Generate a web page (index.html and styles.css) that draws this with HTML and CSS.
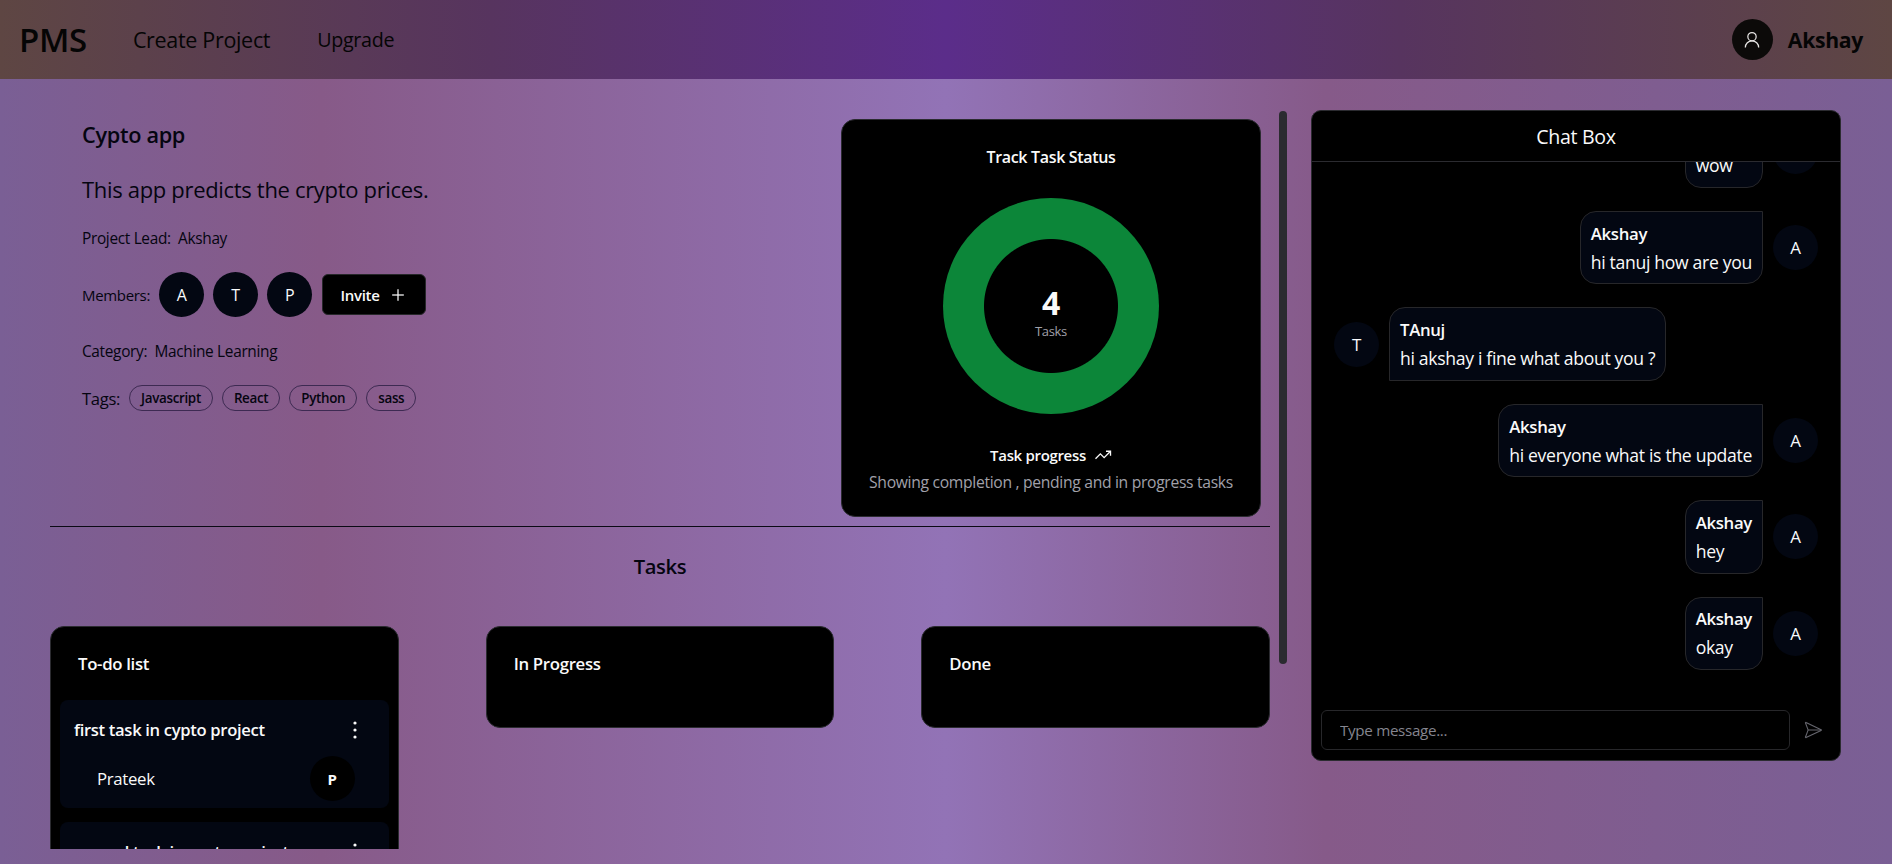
FILE: index.html
```html
<!DOCTYPE html>
<html lang="en">
<head>
  <meta charset="UTF-8">
  <title>PMS</title>
  <link rel="stylesheet" href="styles.css">
</head>
<body>
  <header class="navbar">
    <div class="nav-left">
      <span class="logo">PMS</span>
      <a class="nav-create">Create Project</a>
      <a class="nav-upgrade">Upgrade</a>
    </div>
    <div class="nav-right">
      <span class="user-icon">
        <svg width="20" height="20" viewBox="0 0 24 24" fill="none" stroke="currentColor" stroke-width="1.5"><circle cx="12" cy="8" r="5"/><path d="M20 21a8 8 0 0 0-16 0"/></svg>
      </span>
      <span class="user-name">Akshay</span>
    </div>
  </header>

  <main class="page">
    <section class="details">
      <div class="top">
        <div class="info">
          <h2 class="project-name">Cypto app</h2>
          <p class="project-desc">This app predicts the crypto prices.</p>
          <p class="meta lead">Project Lead:&nbsp; Akshay</p>
          <div class="meta members">
            <span>Members:</span>
            <span class="avatar">A</span>
            <span class="avatar">T</span>
            <span class="avatar">P</span>
            <button class="invite">Invite
              <svg width="20" height="20" viewBox="0 0 24 24" fill="none" stroke="currentColor" stroke-width="1.5"><path d="M5 12h14"/><path d="M12 5v14"/></svg>
            </button>
          </div>
          <p class="meta category">Category:&nbsp; Machine Learning</p>
          <div class="tags">
            <span class="tags-label">Tags:</span>
            <span class="tag">Javascript</span>
            <span class="tag">React</span>
            <span class="tag">Python</span>
            <span class="tag">sass</span>
          </div>
        </div>

        <div class="status-card">
          <h3 class="status-title">Track Task Status</h3>
          <div class="donut">
            <strong class="donut-count">4</strong>
            <span class="donut-label">Tasks</span>
          </div>
          <div class="progress-title">Task progress
            <svg width="18" height="18" viewBox="0 0 24 24" fill="none" stroke="currentColor" stroke-width="1.8"><path d="M22 7 13.5 15.5l-5-5L2 17"/><path d="M16 7h6v6"/></svg>
          </div>
          <p class="progress-text">Showing completion , pending and in progress tasks</p>
        </div>
      </div>

      <hr class="divider">
      <h2 class="tasks-heading">Tasks</h2>

      <div class="board">
        <div class="column">
          <h4 class="column-title">To-do list</h4>
          <div class="task">
            <div class="task-head">
              <span class="task-name">first task in cypto project</span>
              <svg class="dots" width="24" height="24" viewBox="0 0 24 24" fill="currentColor"><circle cx="12" cy="5" r="1.6"/><circle cx="12" cy="12" r="1.6"/><circle cx="12" cy="19" r="1.6"/></svg>
            </div>
            <div class="task-foot">
              <span class="assignee">Prateek</span>
              <span class="avatar avatar-dark">P</span>
            </div>
          </div>
          <div class="task">
            <div class="task-head">
              <span class="task-name">second task in cypto project</span>
              <svg class="dots" width="24" height="24" viewBox="0 0 24 24" fill="currentColor"><circle cx="12" cy="5" r="1.6"/><circle cx="12" cy="12" r="1.6"/><circle cx="12" cy="19" r="1.6"/></svg>
            </div>
            <div class="task-foot">
              <span class="assignee">Tanuj</span>
              <span class="avatar avatar-dark">T</span>
            </div>
          </div>
        </div>
        <div class="column column-empty">
          <h4 class="column-title">In Progress</h4>
        </div>
        <div class="column column-empty">
          <h4 class="column-title">Done</h4>
        </div>
      </div>
    </section>

    <div class="scroll-thumb"></div>

    <aside class="chat">
      <div class="chat-title">Chat Box</div>
      <div class="chat-messages">
        <div class="msg msg-me">
          <div class="bubble"><b>Akshay</b><span>wow</span></div>
          <span class="avatar avatar-chat">A</span>
        </div>
        <div class="msg msg-me">
          <div class="bubble"><b>Akshay</b><span>hi tanuj how are you</span></div>
          <span class="avatar avatar-chat">A</span>
        </div>
        <div class="msg">
          <span class="avatar avatar-chat">T</span>
          <div class="bubble"><b>TAnuj</b><span>hi akshay i fine what about you ?</span></div>
        </div>
        <div class="msg msg-me">
          <div class="bubble"><b>Akshay</b><span>hi everyone what is the update</span></div>
          <span class="avatar avatar-chat">A</span>
        </div>
        <div class="msg msg-me">
          <div class="bubble"><b>Akshay</b><span>hey</span></div>
          <span class="avatar avatar-chat">A</span>
        </div>
        <div class="msg msg-me">
          <div class="bubble"><b>Akshay</b><span>okay</span></div>
          <span class="avatar avatar-chat">A</span>
        </div>
      </div>
      <div class="chat-input">
        <input type="text" placeholder="Type message...">
        <svg class="send" width="20" height="20" viewBox="0 0 24 24" fill="none" stroke="currentColor" stroke-width="1.3"><path d="M3.7 3a.5.5 0 0 0-.7.7l2.9 7.6a2 2 0 0 1 0 1.4L3 20.3a.5.5 0 0 0 .7.7l18-8.5a.5.5 0 0 0 0-.9z"/><path d="M6 12h16"/></svg>
      </div>
    </aside>
  </main>
</body>
</html>
```

FILE: styles.css
```css
* {
  box-sizing: border-box;
}

body {
  margin: 0;
  height: 864px;
  overflow: hidden;
  font-family: "Open Sans", "Noto Sans", sans-serif;
  letter-spacing: -0.02em;
  color: #050510;
  background: linear-gradient(90deg, #7a5f95 0%, #875a88 17%, #9273b6 50%, #865a89 70%, #7a5f95 100%);
}

h2, h3, h4, p {
  margin: 0;
}

.navbar {
  height: 79px;
  display: flex;
  align-items: center;
  justify-content: space-between;
  padding: 0 29px 0 19px;
  color: #050505;
  background: linear-gradient(90deg, #5e4643 0%, #57345f 26%, #5b2d8a 50%, #57345f 74%, #5e4643 100%);
}

.nav-left {
  display: flex;
  align-items: center;
}

.logo {
  font-size: 33px;
  font-weight: 600;
  margin-right: 46px;
}

.nav-create {
  font-size: 21.5px;
  margin-right: 47px;
}

.nav-upgrade {
  font-size: 19.7px;
}

.nav-right {
  display: flex;
  align-items: center;
  gap: 15px;
}

.user-icon {
  width: 41px;
  height: 41px;
  border-radius: 50%;
  background: #0c0a09;
  color: #e7e5e4;
  display: flex;
  align-items: center;
  justify-content: center;
}

.user-name {
  font-size: 21.2px;
  font-weight: 700;
}

.page {
  display: flex;
  height: 770px;
  padding: 31px 0 0 50px;
}

.details {
  width: 1220px;
  overflow: hidden;
}

.scroll-thumb {
  width: 8px;
  height: 553px;
  margin: 1px 24px 0 9px;
  border-radius: 4px;
  background: #2b2b30;
}

.top {
  display: flex;
  justify-content: space-between;
  padding: 9px 9px 0 32px;
}

.project-name {
  font-size: 21.7px;
  font-weight: 600;
  line-height: 28px;
  margin-top: 2px;
}

.project-desc {
  font-size: 22px;
  line-height: 30px;
  margin-top: 25px;
}

.meta {
  font-size: 15.4px;
  line-height: 20px;
}

.lead {
  margin-top: 25px;
}

.members {
  display: flex;
  align-items: center;
  gap: 9px;
  margin-top: 23px;
  font-size: 15px;
}

.avatar {
  width: 45px;
  height: 45px;
  flex-shrink: 0;
  border-radius: 50%;
  background: #030712;
  color: #f8fafc;
  font-size: 16px;
  display: flex;
  align-items: center;
  justify-content: center;
}

.invite {
  height: 41px;
  width: 104px;
  margin-left: 1px;
  display: flex;
  align-items: center;
  justify-content: center;
  gap: 8px;
  border: 1px solid #27272a;
  border-radius: 6px;
  background: #000;
  color: #fafafa;
  font-family: inherit;
  font-size: 15px;
  font-weight: 600;
  letter-spacing: inherit;
}

.category {
  margin-top: 25px;
}

.tags {
  display: flex;
  align-items: center;
  gap: 9px;
  margin-top: 23px;
}

.tags-label {
  font-size: 16.6px;
}

.tag {
  height: 26px;
  padding: 0 11px;
  border: 1px solid #3d2a52;
  border-radius: 13px;
  font-size: 13.4px;
  font-weight: 600;
  display: flex;
  align-items: center;
}

.status-card {
  width: 420px;
  height: 398px;
  padding-top: 26px;
  border: 1px solid #2b2b30;
  border-radius: 14px;
  background: #000;
  color: #fafafa;
  text-align: center;
}

.status-title {
  font-size: 16px;
  font-weight: 600;
  line-height: 22px;
}

.donut {
  width: 216px;
  height: 216px;
  margin: 30px auto 0;
  padding-top: 85px;
  border-radius: 50%;
  background: radial-gradient(circle closest-side, #000 66.5px, #0c8639 67.5px);
  display: flex;
  flex-direction: column;
  align-items: center;
}

.donut-count {
  font-size: 32px;
  line-height: 40px;
}

.donut-label {
  font-size: 13px;
  color: #a1a1aa;
  line-height: 16px;
}

.progress-title {
  margin-top: 31px;
  font-size: 15px;
  font-weight: 600;
  line-height: 20px;
  display: flex;
  align-items: center;
  justify-content: center;
  gap: 8px;
}

.progress-text {
  margin-top: 6px;
  font-size: 15.7px;
  line-height: 22px;
  color: #a1a1aa;
}

.divider {
  margin: 9px 0 0;
  border: 0;
  border-top: 1px solid #0a0a14;
}

.tasks-heading {
  margin-top: 26px;
  text-align: center;
  font-size: 20.2px;
  font-weight: 600;
  line-height: 27px;
}

.board {
  display: grid;
  grid-template-columns: repeat(3, 1fr);
  gap: 87px;
  align-items: start;
  margin-top: 46px;
}

.column {
  padding: 26px 9px 10px;
  border: 1px solid #2b2b30;
  border-radius: 14px;
  background: #000;
  color: #fafafa;
}

.column-empty {
  height: 102px;
}

.column-title {
  padding-left: 18px;
  font-size: 16.8px;
  font-weight: 600;
  line-height: 22px;
}

.task {
  height: 108px;
  margin-top: 14px;
  padding: 18px 14px;
  border-radius: 8px;
  background: #030712;
}

.column-title + .task {
  margin-top: 25px;
}

.task-head {
  display: flex;
  align-items: center;
  justify-content: space-between;
  height: 24px;
  padding-right: 8px;
}

.task-name {
  font-size: 16.6px;
  font-weight: 600;
  margin-top: -2px;
}

.dots {
  flex-shrink: 0;
}

.task-foot {
  display: flex;
  align-items: center;
  justify-content: space-between;
  margin-top: 14px;
  padding: 0 20px 0 23px;
}

.assignee {
  font-size: 16.8px;
}

.avatar-dark {
  background: #000;
  font-size: 15px;
  font-weight: 700;
}

.chat {
  width: 530px;
  height: 651px;
  display: flex;
  flex-direction: column;
  border: 1px solid #2b2b30;
  border-radius: 10px;
  background: #000;
  color: #fafafa;
  overflow: hidden;
}

.chat-title {
  height: 51px;
  flex-shrink: 0;
  border-bottom: 1px solid #2b2b30;
  font-size: 19.6px;
  line-height: 51px;
  text-align: center;
}

.chat-messages {
  flex: 1;
  min-height: 0;
  overflow: hidden;
  display: flex;
  flex-direction: column;
  justify-content: flex-end;
  gap: 23px;
  padding: 0 22px 40px 22px;
}

.msg {
  display: flex;
  align-items: center;
  flex-shrink: 0;
  gap: 10px;
}

.msg-me {
  justify-content: flex-end;
}

.bubble {
  height: 73.4px;
  padding: 8px 10px;
  display: flex;
  flex-direction: column;
  justify-content: center;
  gap: 4px;
  border: 1px solid #27272a;
  border-radius: 16px 16px 16px 0;
  background: #030712;
  font-size: 17.6px;
  line-height: 24px;
}

.msg-me .bubble {
  border-radius: 16px 0 16px 16px;
}

.bubble b {
  font-size: 16.8px;
  font-weight: 600;
}

.avatar-chat {
  font-size: 17px;
}

.chat-input {
  height: 50px;
  flex-shrink: 0;
  display: flex;
  align-items: flex-start;
  padding: 0 0 0 9px;
}

.chat-input input {
  width: 469px;
  height: 40px;
  padding: 0 18px;
  border: 1px solid #27272a;
  border-radius: 6px;
  background: #000;
  color: #fafafa;
  font-family: inherit;
  font-size: 15.2px;
  letter-spacing: inherit;
  outline: none;
}

.chat-input input::placeholder {
  color: #85858f;
}

.send {
  margin: 10px 0 0 13px;
  color: #66666e;
}
```
